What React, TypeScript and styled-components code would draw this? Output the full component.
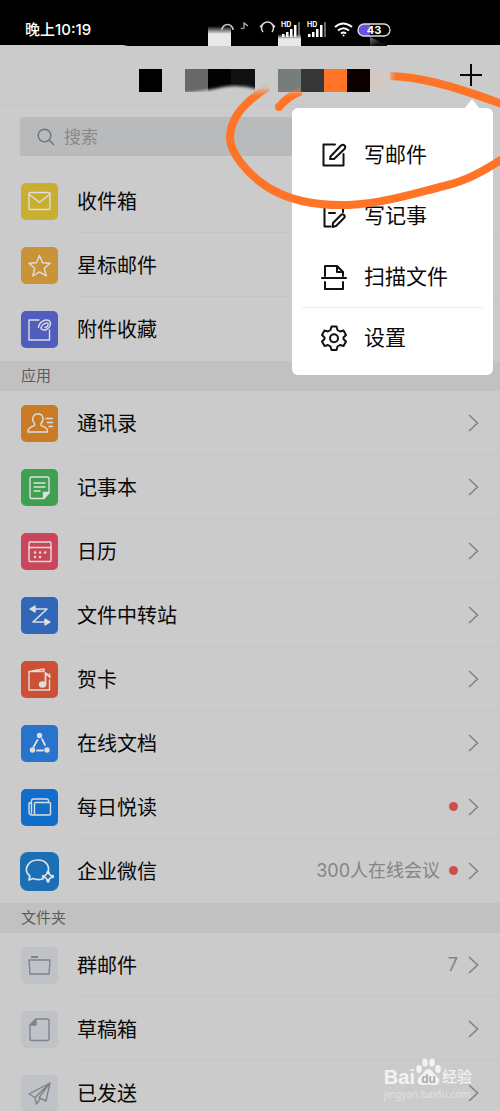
import React from "react";
import styled, { createGlobalStyle } from "styled-components";

const GlobalStyle = createGlobalStyle`
  * { box-sizing: border-box; }
  body {
    margin: 0;
    background: #cbcbcb;
    color: #080808;
    font-family: Roboto, "Noto Sans CJK SC", sans-serif;
  }
  button, input { font: inherit; color: inherit; }
`;

const Screen = styled.div`
  position: relative;
  height: 100vh;
  overflow: hidden;
  background: #cbcbcb;
`;

const StatusBar = styled.div`
  display: flex;
  align-items: center;
  justify-content: space-between;
  height: 45px;
  padding: 15px 109px 0 25px;
  background: #000;
  color: #fff;
`;

const Clock = styled.time`
  font-family: Inter, "Noto Sans CJK SC", sans-serif;
  font-size: 15px;
  font-weight: 500;
  line-height: 20px;
`;

const StatusIcons = styled.div`
  display: flex;
  align-items: center;
`;

const Header = styled.header`
  display: flex;
  align-items: center;
  justify-content: flex-end;
  height: 60px;
  padding-right: 17px;
  border-bottom: 1px solid #c7c7c7;
`;

const AddButton = styled.button`
  display: flex;
  padding: 0;
  border: 0;
  background: none;
`;

const SearchBox = styled.label`
  display: flex;
  align-items: center;
  gap: 9px;
  height: 39px;
  margin: 12px 20px 13px;
  padding: 0 17px;
  border-radius: 3px;
  background: #b8babc;
  color: #7e8082;
`;

const SearchInput = styled.input`
  flex: 1;
  min-width: 0;
  padding: 0;
  border: 0;
  outline: 0;
  background: none;
  font-size: 17px;
  line-height: 24px;
  &::placeholder { color: #88898b; opacity: 1; }
`;

const List = styled.ul`
  margin: 0;
  padding: 0;
  list-style: none;
`;

const Row = styled.a`
  display: flex;
  align-items: center;
  height: 64px;
  padding-left: 20px;
  color: inherit;
  text-decoration: none;
`;

const Tile = styled.span<{ $color: string; $large?: boolean }>`
  display: flex;
  flex: none;
  align-items: center;
  justify-content: center;
  width: ${(p) => (p.$large ? 39 : 37)}px;
  height: ${(p) => (p.$large ? 39 : 37)}px;
  margin: ${(p) => (p.$large ? "0 18px 0 0" : "0 19px 0 1px")};
  border-radius: ${(p) => (p.$large ? 8 : 5)}px;
  background: ${(p) => p.$color};
`;

const RowBody = styled.span<{ $last?: boolean }>`
  display: flex;
  flex: 1;
  align-items: center;
  height: 64px;
  padding-right: 21px;
  border-bottom: 1px solid ${(p) => (p.$last ? "transparent" : "#c5c5c5")};
`;

const RowLabel = styled.span`
  flex: 1;
  padding-top: 2px;
  font-size: 20px;
  line-height: 28px;
`;

const Note = styled.span`
  color: #858585;
  font-family: Inter, "Noto Sans CJK SC", sans-serif;
  font-size: 18px;
  line-height: 24px;
`;

const Dot = styled.span`
  width: 9px;
  height: 9px;
  margin-left: 9px;
  border-radius: 50%;
  background: #cb504e;
`;

const Chevron = styled.svg`
  margin-left: 10px;
`;

const SectionTitle = styled.h2`
  margin: 0;
  padding-left: 21px;
  background: #c1c1c1;
  color: #5c5c5c;
  font-size: 15px;
  font-weight: 400;
  line-height: 30px;
`;

const Menu = styled.div`
  position: absolute;
  top: 108px;
  right: 7px;
  width: 201px;
  padding: 16px 10px 7px;
  border-radius: 6px;
  background: #fff;
  &::before {
    content: "";
    position: absolute;
    top: -9px;
    right: 13px;
    border: 8px solid transparent;
    border-top: 0;
    border-bottom: 10px solid #fff;
  }
`;

const MenuItem = styled.button<{ $divided?: boolean }>`
  display: flex;
  align-items: center;
  gap: 17px;
  width: 100%;
  height: 61px;
  padding: 0 19px;
  border: 0;
  border-top: ${(p) => (p.$divided ? "1px solid #ececec" : "0")};
  background: none;
  font-size: 21px;
  line-height: 30px;
  text-align: left;
`;

const Overlay = styled.svg`
  position: absolute;
  top: 0;
  left: 0;
  pointer-events: none;
`;

const Watermark = styled.div`
  position: absolute;
  right: 28px;
  bottom: 10px;
  color: #f2f2f2;
  font-family: "Liberation Sans", "Noto Sans CJK SC", sans-serif;
  pointer-events: none;
`;

const Brand = styled.div`
  display: flex;
  align-items: flex-end;
  font-size: 20px;
  font-weight: 700;
  line-height: 20px;
`;

const BrandSuffix = styled.span`
  font-size: 15px;
  font-weight: 500;
`;

const Site = styled.div`
  font-family: "Noto Sans", sans-serif;
  font-size: 10px;
  line-height: 14px;
  color: #e2e2e2;
`;

const Glyph = ({ children, color = "#dedede" }: { children: React.ReactNode; color?: string }) => (
  <svg width="29" height="29" viewBox="0 0 29 29" fill="none" stroke={color} strokeWidth="1.4" strokeLinejoin="round" strokeLinecap="round" aria-hidden="true">
    {children}
  </svg>
);

const glyphs: Record<string, React.ReactNode> = {
  inbox: <Glyph><rect x="4" y="5.500" width="21" height="17" rx="1" /><path d="M4.500 7.500 14.500 15.500 24.500 7.500" /></Glyph>,
  star: <Glyph><path d="m14.500 4.500 3 7.200 7.500.6-5.700 5 1.900 7.700-6.700-4.100L7.800 25l1.900-7.700-5.700-5 7.500-.6z" /></Glyph>,
  clip: <Glyph><path d="M14 5H4v20h20.500V15" /><path d="M13.500 12.500C14 7 20 4 24 5.500c3 2.500 1 7.500-2.500 9-4 1.500-6.500-.5-5-3 1.500-2.800 5.500-4.500 6.500-3s-1.500 3.700-3 4" /></Glyph>,
  contact: <Glyph><path d="M9.500 14.500C5.500 9.500 9 4.500 13 5c4.500-.5 7 5 3 9.500v2c2.500 1.500 7 1.500 6.500 6.500H3c-.5-4.500 4-5 6.500-6.500zM21 9.500h6.500M22.500 13.500h5M24 17.500h3.500" /></Glyph>,
  notes: <Glyph><path d="M6.500 4h16q1.500 0 1.500 1.500V20l-5 5.500H6.500Q5 25.500 5 24V5.500Q5 4 6.500 4zM9 10h11M9 14h11M9 18h6" /><path d="M18.500 25v-5.500h5z" fill="#dedede" /></Glyph>,
  calendar: <Glyph><rect x="4" y="5" width="22" height="19.500" rx="1" /><path d="M4 10.500h22" /><path d="M10 15.500h.1M15 15.500h.1M20 15.500h.1M10 20h.1M15 20h.1" strokeWidth="2.500" /></Glyph>,
  transfer: <Glyph><path d="M9 8h13L8 21h14" strokeWidth="1.700" /><path d="M10 5v6L5 8zM20 18v6l5-3z" fill="#dedede" /></Glyph>,
  card: <Glyph><path d="M18 6.500H4V25h20.500V15M7 6l12-2v2.500M24.500 9v3" /><path d="M20.500 19.500V8l4.500 4" strokeWidth="1.800" /><ellipse cx="17.500" cy="19.500" rx="3" ry="2.500" fill="#dedede" /></Glyph>,
  docs: <Glyph><path d="m12.500 11-4 7M17 10l3 6M12 21.500h6" strokeWidth="1.800" /><circle cx="14.500" cy="6.500" r="2" fill="#dedede" /><circle cx="7.500" cy="21" r="2" fill="#dedede" /><circle cx="22" cy="21" r="2" fill="#dedede" /></Glyph>,
  reading: <Glyph><rect x="9.500" y="9.500" width="16" height="12.500" rx="1" /><path d="M9.500 22H7q-3 0-3-3V11q0-1.500 2-1.500M6.500 20V8q0-2 2-2h13q2 0 2 2v1.500" /></Glyph>,
  wecom: (
    <svg width="39" height="39" viewBox="0 0 39 39" fill="none" stroke="#e4e4e4" strokeWidth="1.700" strokeLinejoin="round" aria-hidden="true">
      <path d="M24 26.500c-4 1.500-8 1.200-11 0L9 28l.8-4C2.500 18 8 8 18 8c8 0 12 6 10 12" />
      <path d="M28 20q1 3 5 4.500-4 1.500-5 5-1-3.500-4.500-5 3.500-1.500 4.500-4.500" strokeWidth="1.500" />
      <g fill="#e4e4e4" stroke="none"><circle cx="28" cy="20.500" r="1.700" /><circle cx="32.500" cy="24.500" r="1.700" /><circle cx="28" cy="29" r="1.700" /><circle cx="23.500" cy="24.500" r="1.700" /></g>
    </svg>
  ),
  folder: <Glyph color="#808488"><path d="M4 9h21l-1 14H5z" /><path d="M6 6h7" strokeWidth="2" strokeLinecap="butt" /></Glyph>,
  draft: <Glyph color="#808488"><path d="M11 4h11q2 0 2 2v18q0 1.500-2 1.500H7q-2 0-2-1.500V10z" /><path d="M11 4v6H5z" fill="#808488" /></Glyph>,
  sent: <Glyph color="#808488"><path d="M25 4 4 15l6 3.500L25 4l-4 18-7-3.500L25 4M10 18.500 11.500 25l3.500-5" /></Glyph>,
};

interface Entry {
  icon: string;
  label: string;
  color: string;
  note?: string;
  dot?: boolean;
  large?: boolean;
}

const mailboxes: Entry[] = [
  { icon: "inbox", label: "收件箱", color: "#c8ae31" },
  { icon: "star", label: "星标邮件", color: "#c99338" },
  { icon: "clip", label: "附件收藏", color: "#505dbd" },
];

const apps: Entry[] = [
  { icon: "contact", label: "通讯录", color: "#ca7b28" },
  { icon: "notes", label: "记事本", color: "#40a052" },
  { icon: "calendar", label: "日历", color: "#cb4659" },
  { icon: "transfer", label: "文件中转站", color: "#3167b8" },
  { icon: "card", label: "贺卡", color: "#cd4f34" },
  { icon: "docs", label: "在线文档", color: "#2874cc" },
  { icon: "reading", label: "每日悦读", color: "#126ecb", dot: true },
  { icon: "wecom", label: "企业微信", color: "#1b70b5", note: "300人在线会议", dot: true, large: true },
];

const folders: Entry[] = [
  { icon: "folder", label: "群邮件", color: "#bfc3c7", note: "7" },
  { icon: "draft", label: "草稿箱", color: "#bfc3c7" },
  { icon: "sent", label: "已发送", color: "#bfc3c7" },
];

const EntryList = ({ entries }: { entries: Entry[] }) => (
  <List>
    {entries.map((entry, i) => (
      <li key={entry.label}>
        <Row href="#">
          <Tile $color={entry.color} $large={entry.large}>{glyphs[entry.icon]}</Tile>
          <RowBody $last={i === entries.length - 1}>
            <RowLabel>{entry.label}</RowLabel>
            {entry.note && <Note>{entry.note}</Note>}
            {entry.dot && <Dot />}
            <Chevron width="11" height="18" viewBox="0 0 11 18" fill="none" stroke="#858585" strokeWidth="1.700" aria-hidden="true">
              <path d="m1 1 8.500 8L1 17" />
            </Chevron>
          </RowBody>
        </Row>
      </li>
    ))}
  </List>
);

const MenuGlyph = ({ children }: { children: React.ReactNode }) => (
  <svg width="26" height="26" viewBox="0 0 26 26" fill="none" stroke="#111" strokeWidth="2" strokeLinejoin="round" strokeLinecap="round" aria-hidden="true">
    {children}
  </svg>
);

const Signal = () => (
  <svg width="26" height="20" viewBox="0 0 26 20" fill="#fff" aria-hidden="true">
    <text x="0" y="7" fontSize="7" fontWeight="700" fontFamily="Inter, sans-serif">HD</text>
    <path d="M1 14h2.500v3H1zM5 12h2.500v5H5zM9 9h2.500v8H9zM13 5h2.500v12H13z" />
    <path d="M17 2h2v15h-2z" fill="#666" />
  </svg>
);

export default function App() {
  return (
    <>
      <GlobalStyle />
      <Screen>
        <StatusBar>
          <Clock>晚上10:19</Clock>
          <StatusIcons>
            <svg width="64" height="20" viewBox="0 0 64 20" fill="none" stroke="#bbb" strokeWidth="1.500" aria-hidden="true">
              <path d="M27 9V3l4 3M24 8l2 1" strokeWidth="1.200" />
              <path d="M46 12a6 6 0 1 1 9 0M43 7l4-4M54 3l4 4" stroke="#ddd" />
            </svg>
            <Signal />
            <Signal />
            <svg width="24" height="20" viewBox="0 0 24 20" fill="none" stroke="#fff" strokeWidth="2" aria-hidden="true">
              <path d="M2 7q8-7 17 0M5 10.500q5.500-4.500 11 0M8 13.500q2.500-2 5 0" />
              <circle cx="10.500" cy="15.500" r="1" fill="#fff" stroke="none" />
            </svg>
            <svg width="34" height="20" viewBox="0 0 34 20" aria-hidden="true">
              <path d="M7 4h6v12H7A6 6 0 0 1 7 4" fill="#6650e0" />
              <rect x="1" y="4" width="32" height="12" rx="6" fill="none" stroke="#ddd" strokeWidth="1.300" />
              <text x="17" y="14" textAnchor="middle" fontSize="11" fontWeight="700" fill="#fff" fontFamily="Inter, sans-serif">43</text>
            </svg>
          </StatusIcons>
        </StatusBar>

        <Header>
          <AddButton type="button" aria-label="添加">
            <svg width="24" height="24" viewBox="0 0 24 24" stroke="#080808" strokeWidth="2" aria-hidden="true">
              <path d="M12 1v22M1 12h22" />
            </svg>
          </AddButton>
        </Header>

        <SearchBox>
          <svg width="18" height="18" viewBox="0 0 18 18" fill="none" stroke="#707274" strokeWidth="1.400" aria-hidden="true">
            <circle cx="7.500" cy="7.500" r="6.300" /><path d="m12 12 5 5" />
          </svg>
          <SearchInput type="search" placeholder="搜索" aria-label="搜索" />
        </SearchBox>

        <EntryList entries={mailboxes} />
        <SectionTitle>应用</SectionTitle>
        <EntryList entries={apps} />
        <SectionTitle>文件夹</SectionTitle>
        <EntryList entries={folders} />

        <Menu>
          <MenuItem type="button">
            <MenuGlyph><path d="M14 2.500H2.500v21h20V12" /><path d="m9.500 14.500 10.500-11q2-1.500 3.500 0t0 3.500L13 17H9z" /></MenuGlyph>
            写邮件
          </MenuItem>
          <MenuItem type="button">
            <MenuGlyph><path d="M22 9V2.500H3.500v21h6M8 10h6" /><path d="m12 20 8-8q1.500-1.500 3 0t0 3l-8 8-3.500 1z" /></MenuGlyph>
            写记事
          </MenuItem>
          <MenuItem type="button">
            <MenuGlyph><path d="M4 12V2h12l6 6v4M16 2v6h6M1 14h24M4 18v7h18v-7" /></MenuGlyph>
            扫描文件
          </MenuItem>
          <MenuItem type="button" $divided>
            <MenuGlyph>
              <path d="M10.500 1.500h5l1 3.500 2.500 1.500 3.500-1 2.500 4.500-2.500 2.500v1.500l2.500 2.500-2.500 4.500-3.500-1-2.500 1.500-1 3.500h-5l-1-3.500L7 20l-3.500 1L1 16.500 3.500 14v-1.500L1 10l2.500-4.500 3.500 1L9.500 5z" />
              <circle cx="13" cy="13.200" r="4" />
            </MenuGlyph>
            设置
          </MenuItem>
        </Menu>

        <Overlay width="500" height="220" viewBox="0 0 500 220" aria-hidden="true">
          <defs>
            <linearGradient id="rise" x1="0" y1="0" x2="0" y2="1">
              <stop offset="0" stopColor="#e8e8e8" stopOpacity="0" />
              <stop offset=".4" stopColor="#e8e8e8" />
            </linearGradient>
            <linearGradient id="pink" x1="0" y1="0" x2="1" y2="0">
              <stop offset="0" stopColor="#d6c6bf" />
              <stop offset="1" stopColor="#d0cac7" />
            </linearGradient>
            <linearGradient id="corner" x1="0" y1="0" x2="1" y2="1">
              <stop offset="0" stopColor="#777" />
              <stop offset=".6" stopColor="#111" />
            </linearGradient>
            <linearGradient id="strokeFade" gradientUnits="userSpaceOnUse" x1="388" y1="0" x2="396" y2="0">
              <stop offset="0" stopColor="#ff7426" stopOpacity=".2" />
              <stop offset="1" stopColor="#ff7426" />
            </linearGradient>
            <linearGradient id="topFade" gradientUnits="userSpaceOnUse" x1="0" y1="87" x2="0" y2="96">
              <stop offset="0" stopColor="#ff7426" stopOpacity=".1" />
              <stop offset="1" stopColor="#ff7426" />
            </linearGradient>
            <filter id="soft"><feGaussianBlur stdDeviation="1.500" /></filter>
          </defs>
          <path d="M118 44h252v2H128z" fill="#000" />
          <rect x="208" y="26" width="23" height="20" fill="url(#rise)" />
          <path d="M222 30a5.500 5.500 0 1 1 11 0" fill="none" stroke="#ccc" strokeWidth="1.500" />
          <rect x="278" y="34" width="23" height="12" fill="url(#rise)" />
          <path d="M370 37l17 8v1h-17z" fill="url(#corner)" />
          <rect x="139" y="69" width="23" height="23" fill="#000" />
          <rect x="185" y="69" width="23" height="23" fill="#686868" />
          <rect x="208" y="69" width="23" height="23" fill="#020202" />
          <rect x="231" y="69" width="24" height="23" fill="#111" />
          <path d="M183 93q22-2 40-6 16-3 34 2v7h-74z" fill="#cbcbcb" filter="url(#soft)" />
          <rect x="278" y="69" width="23" height="23" fill="#777d78" />
          <rect x="301" y="69" width="23" height="23" fill="#363537" />
          <rect x="324" y="69" width="23" height="23" fill="#ff7426" />
          <rect x="370" y="70" width="18" height="21" fill="url(#pink)" filter="url(#soft)" />
          <rect x="347" y="69" width="23" height="23" fill="#0d0000" />
          <g fill="none" strokeWidth="8">
            <path d="M390 76C418 77 445 83 502 104" stroke="url(#strokeFade)" />
            <path d="M268 87C240 105 230 121 230 138c0 13 16 36 39 50 20 12 48 18 80 17 35-2 63-11 95-19 22-5 38-14 60-28" stroke="url(#topFade)" />
            <path d="M279 107q8-10 22-16" stroke="url(#topFade)" />
            <circle cx="279" cy="107" r="4" fill="#ff7426" stroke="none" />
          </g>
        </Overlay>

        <Watermark>
          <Brand>
            Bai
            <svg width="27" height="29" viewBox="0 0 27 29" fill="#f2f2f2" aria-hidden="true">
              <ellipse cx="4" cy="11" rx="2.800" ry="3.900" /><ellipse cx="10" cy="4.500" rx="2.800" ry="4" />
              <ellipse cx="17" cy="4.500" rx="2.800" ry="4" /><ellipse cx="23" cy="11" rx="2.800" ry="3.900" />
              <path d="M13.500 11c4 0 4 4 8 7 5 4 3 9-2 9-3 0-4-.5-6-.5s-3 .5-6 .5c-5 0-7-5-2-9 4-3 4-7 8-7z" />
              <text x="13.500" y="24.500" textAnchor="middle" fontSize="12" fontWeight="700" fill="#a8a8a8">du</text>
            </svg>
            <BrandSuffix>经验</BrandSuffix>
          </Brand>
          <Site>jingyan.baidu.com</Site>
        </Watermark>
      </Screen>
    </>
  );
}
